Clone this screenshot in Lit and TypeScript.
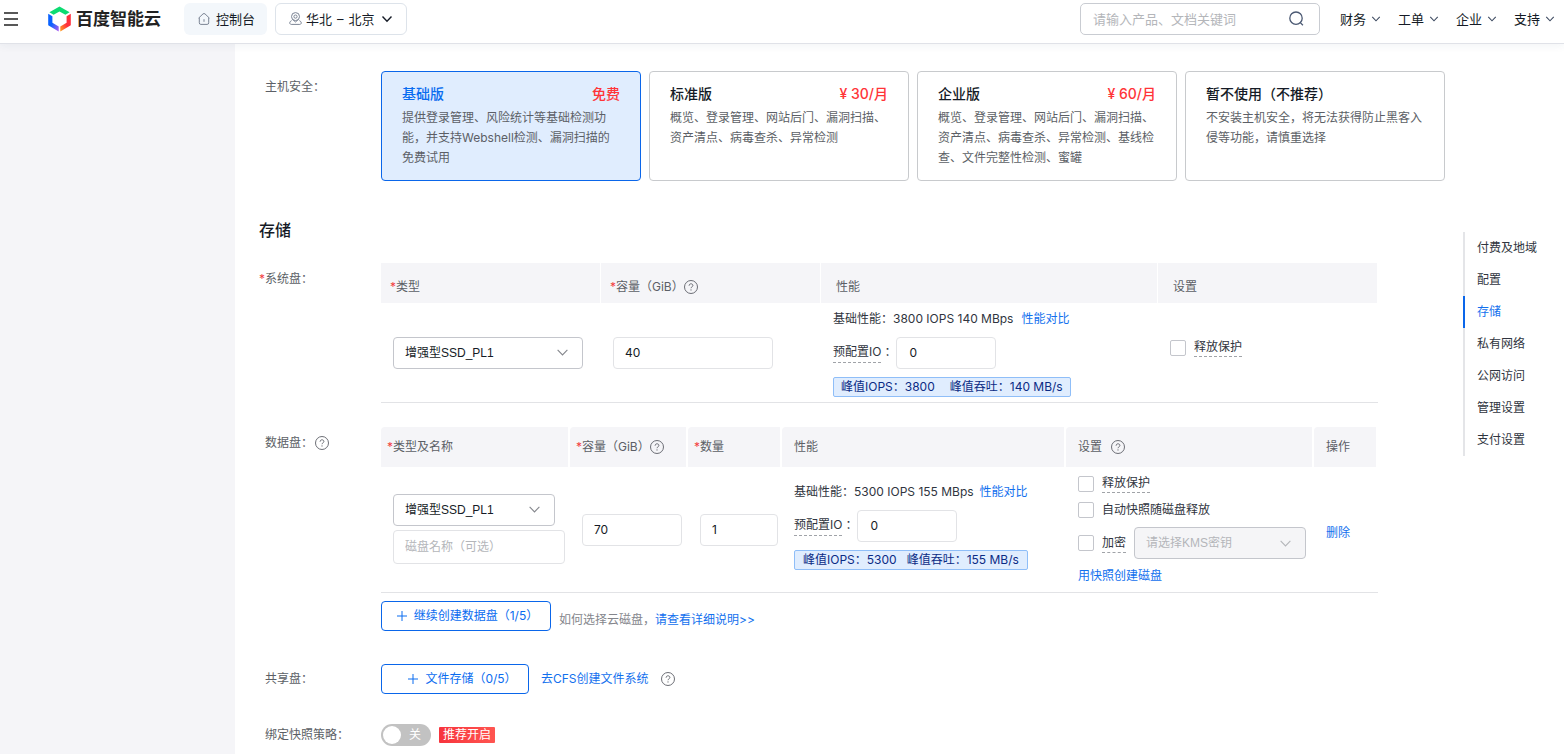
import { LitElement, html, css, nothing } from "lit";
import { customElement, property } from "lit/decorators.js";
import { classMap } from "lit/directives/class-map.js";

const chevron = (size: number, weight = 1) => html`
  <svg class="chevron" width=${size} height=${size} viewBox="0 0 12 12" fill="none" aria-hidden="true">
    <path d="M1.5 3.5 6 8.2l4.5-4.7" stroke="currentColor" stroke-width=${weight} />
  </svg>`;

const plus = html`
  <svg width="12" height="12" viewBox="0 0 12 12" aria-hidden="true">
    <path d="M6 1v10M1 6h10" stroke="currentColor" fill="none" />
  </svg>`;

const controls = css`
  * { box-sizing: border-box; }
  a { color: var(--link); text-decoration: none; }
  button, input, select { font: inherit; color: inherit; margin: 0; }
  button { cursor: pointer; }
  svg { display: block; flex: none; }
  .dashed { border-bottom: 1px dashed #a0a3a8; line-height: 18px; }
`;

/** Circled question mark that sits after a caption. */
@customElement("help-mark")
export class HelpMark extends LitElement {
  static styles = css`
    :host { display: inline-flex; color: #5c5f66; flex: none; }
    svg { display: block; }
  `;
  render() {
    return html`
      <svg width="14" height="14" viewBox="0 0 14 14" fill="none" stroke="currentColor" role="img" aria-label="帮助">
        <circle cx="7" cy="7" r="6.5" stroke-width=".9" />
        <path d="M5.1 5.7c0-1.1.8-1.9 1.9-1.9s1.9.7 1.9 1.7c0 1.3-1.9 1.4-1.9 2.7" stroke-width=".9" />
        <path d="M7 9.4v1.1" stroke-width="1" />
      </svg>`;
  }
}

@customElement("top-bar")
export class TopBar extends LitElement {
  static styles = [controls, css`
    :host { display: block; }
    .bar {
      display: flex; align-items: center; height: 44px; padding: 0 9px 6px 4px;
      border-bottom: 1px solid #e0e2e8; background: #fff; font-size: 13px; color: #151b26;
      box-shadow: 0 2px 8px rgba(40, 60, 110, .06); position: relative;
    }
    .menu { display: flex; padding: 0; border: 0; background: none; }
    .brand { display: flex; align-items: center; gap: 5px; margin-left: 30px; font-size: 17px; font-weight: 700; color: #222; white-space: nowrap; }
    .console, .region {
      display: flex; align-items: center; height: 32px; border-radius: 6px; border: 1px solid transparent;
      white-space: nowrap; padding: 0 12px 0 13px;
    }
    .console { margin-left: 23px; gap: 6px; background: #f3f7fb; color: #151b26; padding: 0 11px 0 13px; }
    .region { margin-left: 8px; gap: 4px; background: #fff; border-color: #dde3ea; padding-right: 13px; }
    .region .chevron { margin-left: 2px; }
    .place { display: flex; gap: 5px; }
    .glyph { color: #7b8494; }
    .search {
      display: flex; align-items: center; width: 240px; height: 32px; margin-left: auto; padding: 0 15px 0 12px;
      border: 1px solid #c9ccd2; border-radius: 5px; color: #4a5872;
    }
    .search input { flex: 1; min-width: 0; border: 0; outline: 0; padding: 0; background: none; }
    .search input::placeholder { color: #b4b6ba; opacity: 1; }
    .search button { display: flex; padding: 0; border: 0; background: none; }
    nav { display: flex; gap: 17px; margin-left: 20px; white-space: nowrap; }
    nav a { display: flex; align-items: center; gap: 5px; color: #151b26; }
    nav .chevron { color: #3d4a60; }
  `];
  render() {
    return html`
      <header class="bar">
        <button class="menu" aria-label="菜单">
          <svg width="14" height="14" viewBox="0 0 14 14"><path d="M0 1h14M0 7h14M0 13h14" stroke="#222" stroke-width="1.6" /></svg>
        </button>
        <a class="brand" href="#">
          <svg width="23" height="26" viewBox="0 0 23 26" aria-hidden="true">
            <defs>
              <linearGradient id="bl" x1="0" y1="0" x2="1" y2="1"><stop offset=".45" stop-color="#0a62ff" /><stop offset="1" stop-color="#b45cf0" /></linearGradient>
              <linearGradient id="rd" x1="1" y1="0" x2="0" y2="1"><stop offset=".5" stop-color="#ff2f3d" /><stop offset="1" stop-color="#ffa21f" /></linearGradient>
            </defs>
            <path d="M1.4 6.3 11.5.4l10.1 5.9-4.2 2.5-5.9-3.4-5.9 3.4z" fill="#0ddb72" />
            <path d="M.2 7.8l4.2 2.4v6.6l6.3 3.6v5L.2 19.2z" fill="url(#bl)" />
            <path d="M22.8 7.8l-4.2 2.4v6.6l-6.3 3.6v5l10.5-6.2z" fill="url(#rd)" />
          </svg>
          <span>百度智能云</span>
        </a>
        <a class="console" href="#">
          <svg class="glyph" width="12" height="12" viewBox="0 0 12 12" fill="none" stroke="currentColor" aria-hidden="true">
            <path d="M.6 5.1 5 .9q1-.8 2 0l4.4 4.2M1.3 4.6v5.2q0 1.6 1.6 1.6h6.2q1.6 0 1.6-1.6V4.6M6 6.2v2.6" />
          </svg>
          <span>控制台</span>
        </a>
        <button class="region">
          <svg class="glyph" width="13" height="13" viewBox="0 0 13 13" fill="none" stroke="currentColor" aria-hidden="true">
            <circle cx="6.5" cy="4.6" r="4" /><circle cx="6.5" cy="4.6" r="1.6" />
            <path d="M3.6 7.4 6.5 10l2.9-2.6M2.6 8.6C.2 9.6.2 12.2 2.2 12.4h8.6c2-.2 2-2.8-.4-3.8" />
          </svg>
          <span class="place"><span>华北</span><span>–</span><span>北京</span></span>
          ${chevron(12, 1.4)}
        </button>
        <form class="search" role="search">
          <input type="text" aria-label="搜索" placeholder="请输入产品、文档关键词" />
          <button type="button" aria-label="搜索">
            <svg width="15" height="15" viewBox="0 0 15 15" fill="none" stroke="currentColor" stroke-width="1.3">
              <circle cx="7" cy="7.2" r="6.2" /><path d="m11.3 11.6 2.6 2.6" />
            </svg>
          </button>
        </form>
        <nav>${["财务", "工单", "企业", "支持"].map((t) => html`<a href="#">${t}${chevron(10, 1.3)}</a>`)}</nav>
      </header>`;
  }
}

interface Plan { name: string; price?: string; text: string; active?: boolean; }

@customElement("plan-card")
export class PlanCard extends LitElement {
  @property({ attribute: false }) plan!: Plan;
  static styles = [controls, css`
    :host { display: grid; }
    .card {
      display: flex; flex-direction: column; gap: 4px; padding: 12px 20px; min-height: 110px;
      border: 1px solid #c8cacd; border-radius: 4px; background: #fff; text-align: left; line-height: 20px; color: #5c5f66;
    }
    .active { border-color: #0a66ea; background: #e0edfe; }
    .head { display: flex; justify-content: space-between; align-self: stretch; font-size: 14px; font-weight: 500; color: #151b26; white-space: nowrap; }
    .active .name { color: #0a6cf0; }
    .price { color: #ff3438; }
  `];
  render() {
    const p = this.plan;
    return html`
      <button class=${classMap({ card: true, active: !!p.active })} aria-pressed=${p.active ? "true" : "false"}>
        <span class="head"><span class="name">${p.name}</span>${p.price ? html`<span class="price">${p.price}</span>` : nothing}</span>
        <span>${p.text}</span>
      </button>`;
  }
}

/** Base performance line, reserved IO box and the peak summary. */
@customElement("disk-performance")
export class DiskPerformance extends LitElement {
  @property() base = "";
  @property() iops = "";
  @property() rate = "";
  @property({ type: Boolean }) wide = false;
  static styles = [controls, css`
    :host { display: flex; flex-direction: column; align-items: flex-start; gap: 8px; white-space: nowrap; line-height: 20px; color: #303540; }
    .line { display: flex; gap: 6px; }
    .line.wide { gap: 8px; }
    .io { display: flex; align-items: center; }
    .io label { display: flex; }
    .colon { font-family: Inter, "Noto Sans CJK TC", sans-serif; margin-right: 3px; }
    .io input { width: 100px; height: 32px; padding: 0 12px; border: 1px solid #e2e3e6; border-radius: 4px; color: #151b26; background: #fff; }
    .peak { display: flex; gap: 10px; height: 20px; line-height: 18px; padding: 0 8px; border: 1px solid #8fbef8; border-radius: 2px; background: #e0edfe; color: #0b2b85; }
    .peak.wide { gap: 15px; padding: 0 7px; }
  `];
  render() {
    const wide = this.wide;
    return html`
      <div class=${classMap({ line: true, wide })}><span>基础性能：${this.base}</span><a href="#">性能对比</a></div>
      <div class="io">
        <label for="io"><span class="dashed">预配置IO</span><span class="colon">：</span></label>
        <input id="io" type="text" value="0" />
      </div>
      <div class=${classMap({ peak: true, wide })}><span>峰值IOPS：${this.iops}</span><span>峰值吞吐：${this.rate}</span></div>`;
  }
}

@customElement("storage-form")
export class StorageForm extends LitElement {
  static styles = [controls, css`
    :host { display: block; }
    .row { display: grid; grid-template-columns: 122px minmax(0, 1fr); margin-bottom: 24px; }
    .row.more { margin-bottom: 32px; }
    .caption { display: flex; align-items: center; gap: 2px; height: 32px; padding-left: 6px; color: #5c5f66; white-space: nowrap; }
    .req::before { content: "*"; display: inline-block; width: 6px; margin-left: -6px; color: #f33e3e; }
    h2 { margin: 36px 0 20px; font-size: 16px; line-height: 26px; font-weight: 500; color: #151b26; }
    .plans { display: grid; grid-template-columns: repeat(4, minmax(0, 1fr)); gap: 8px; }
    table { width: 100%; max-width: 997px; table-layout: fixed; border-collapse: separate; border-spacing: 0; }
    th { height: 40px; padding: 0 0 0 12px; border-right: 2px solid #fff; background: #f5f5f8; background-clip: padding-box; border-top-left-radius: 4px; text-align: left; font-weight: 400; color: #5c5f66; white-space: nowrap; }
    .system th { padding: 7px 0 0 15px; border-right-width: 1px; border-radius: 0; }
    .title { display: flex; align-items: center; }
    .title.spaced help-mark { margin-left: 9px; }
    td { height: 126px; padding: 0 0 0 12px; border-bottom: 1px solid #e2e3e6; white-space: nowrap; color: #303540; }
    .system td { height: 100px; }
    .stack { display: flex; flex-direction: column; align-items: flex-start; gap: 4px; padding-bottom: 2px; }
    .pick { display: inline-flex; align-items: center; position: relative; color: #151b26; }
    .pick select { appearance: none; width: 162px; height: 32px; padding: 0 32px 0 11px; border: 1px solid #c4c6cc; border-radius: 4px; background: #fff; font-family: "Liberation Sans", "Noto Sans CJK SC", sans-serif; }
    .system .pick select { width: 190px; }
    .pick .chevron { position: absolute; right: 14px; color: #84868c; pointer-events: none; }
    .pick.key select { width: 172px; background: #f5f5f7; color: #b4b6ba; opacity: 1; }
    .pick.key .chevron { color: #b4b6ba; }
    .box { height: 32px; width: 160px; padding: 0 11px; border: 1px solid #e2e3e6; border-radius: 4px; color: #151b26; background: #fff; display: block; }
    .size { width: 100px; }
    .count { width: 78px; }
    .diskname { width: 172px; height: 34px; font-family: Inter, "Noto Sans CJK TC", sans-serif; }
    .diskname::placeholder { color: #b4b6ba; opacity: 1; }
    .check { display: flex; align-items: center; gap: 8px; }
    .check input { appearance: none; width: 16px; height: 16px; border: 1px solid #c4c6cc; border-radius: 2px; background: #fff; flex: none; }
    .settings { display: flex; flex-direction: column; align-items: flex-start; gap: 8px; line-height: 18px; }
    .encrypt { display: flex; align-items: center; gap: 8px; }
    .lift { padding-bottom: 10px; }
    .low { padding-top: 6px; }
    .raise { padding-bottom: 8px; }
    .under { display: flex; align-items: flex-end; gap: 8px; margin-top: 8px; line-height: 22px; color: #84868c; }
    .inline { display: flex; align-items: center; gap: 12px; height: 32px; }
    .inline.tight { gap: 8px; }
    .add { display: flex; align-items: center; justify-content: center; gap: 6px; width: 170px; height: 30px; padding: 0 0 0 2px; border: 1px solid #0a66ea; border-radius: 4px; background: #fff; color: #0a6cf0; white-space: nowrap; }
    .file { width: 148px; padding: 0 0 0 14px; }
    .switch { display: flex; align-items: center; gap: 8px; width: 50px; height: 22px; padding: 0 2px; border: 0; border-radius: 11px; background: #c2c2c2; color: #fff; }
    .knob { width: 18px; height: 18px; border-radius: 50%; background: #fff; }
    .badge { height: 16px; line-height: 16px; padding: 0 4px; border-radius: 1px; background: linear-gradient(90deg, #f7343d, #ff5550); color: #fff; }
    .w220 { width: 220px; } .w337 { width: 337px; } .w189 { width: 189px; } .w118 { width: 118px; }
    .w94 { width: 94px; } .w284 { width: 284px; } .w248 { width: 248px; } .w64 { width: 64px; }
  `];

  plans: Plan[] = [
    { name: "基础版", price: "免费", text: "提供登录管理、风险统计等基础检测功能，并支持Webshell检测、漏洞扫描的免费试用", active: true },
    { name: "标准版", price: "¥ 30/月", text: "概览、登录管理、网站后门、漏洞扫描、资产清点、病毒查杀、异常检测" },
    { name: "企业版", price: "¥ 60/月", text: "概览、登录管理、网站后门、漏洞扫描、资产清点、病毒查杀、异常检测、基线检查、文件完整性检测、蜜罐" },
    { name: "暂不使用（不推荐）", text: "不安装主机安全，将无法获得防止黑客入侵等功能，请慎重选择" },
  ];

  head(text: string, width: string, opts: { req?: boolean; help?: boolean; spaced?: boolean } = {}) {
    return html`<th class=${width} scope="col"><div class=${classMap({ title: true, spaced: !!opts.spaced })}>
      <span class=${opts.req ? "req" : ""}>${text}</span>${opts.help ? html`<help-mark></help-mark>` : nothing}</div></th>`;
  }

  type() {
    return html`<span class="pick"><select aria-label="类型"><option>增强型SSD_PL1</option></select>${chevron(13)}</span>`;
  }

  render() {
    return html`
      <div class="row">
        <div class="caption">主机安全：</div>
        <div class="plans">${this.plans.map((p) => html`<plan-card .plan=${p}></plan-card>`)}</div>
      </div>
      <h2>存储</h2>
      <div class="row">
        <div class="caption"><span class="req">系统盘：</span></div>
        <table class="system">
          <thead><tr>
            ${this.head("类型", "w220", { req: true })}
            ${this.head("容量（GiB）", "w220", { req: true, help: true })}
            ${this.head("性能", "w337")}
            ${this.head("设置", "w220")}
          </tr></thead>
          <tbody><tr>
            <td>${this.type()}</td>
            <td><input class="box" type="text" aria-label="容量" value="40" /></td>
            <td><disk-performance wide base="3800 IOPS 140 MBps" iops="3800" rate="140 MB/s"></disk-performance></td>
            <td><div class="lift"><label class="check"><input type="checkbox" /><span class="dashed">释放保护</span></label></div></td>
          </tr></tbody>
        </table>
      </div>
      <div class="row more">
        <div class="caption">数据盘：<help-mark></help-mark></div>
        <div>
          <table>
            <thead><tr>
              ${this.head("类型及名称", "w189", { req: true })}
              ${this.head("容量（GiB）", "w118", { req: true, help: true })}
              ${this.head("数量", "w94", { req: true })}
              ${this.head("性能", "w284")}
              ${this.head("设置", "w248", { help: true, spaced: true })}
              ${this.head("操作", "w64")}
            </tr></thead>
            <tbody><tr>
              <td><div class="stack">${this.type()}<input class="box diskname" type="text" aria-label="磁盘名称" placeholder="磁盘名称（可选）" /></div></td>
              <td><input class="box size" type="text" aria-label="容量" value="70" /></td>
              <td><input class="box count" type="text" aria-label="数量" value="1" /></td>
              <td><div class="raise"><disk-performance base="5300 IOPS 155 MBps" iops="5300" rate="155 MB/s"></disk-performance></div></td>
              <td><div class="settings">
                <label class="check"><input type="checkbox" /><span class="dashed">释放保护</span></label>
                <label class="check"><input type="checkbox" /><span>自动快照随磁盘释放</span></label>
                <div class="encrypt">
                  <label class="check"><input type="checkbox" /><span class="dashed">加密</span></label>
                  <span class="pick key"><select disabled aria-label="KMS密钥"><option>请选择KMS密钥</option></select>${chevron(13)}</span>
                </div>
                <a href="#">用快照创建磁盘</a>
              </div></td>
              <td><div class="low"><a href="#">删除</a></div></td>
            </tr></tbody>
          </table>
          <div class="under">
            <button class="add">${plus}继续创建数据盘（1/5）</button>
            <span>如何选择云磁盘，<a href="#">请查看详细说明&gt;&gt;</a></span>
          </div>
        </div>
      </div>
      <div class="row">
        <div class="caption">共享盘：</div>
        <div class="inline">
          <button class="add file">${plus}文件存储（0/5）</button>
          <a href="#">去CFS创建文件系统</a><help-mark></help-mark>
        </div>
      </div>
      <div class="row">
        <div class="caption">绑定快照策略：</div>
        <div class="inline tight">
          <button class="switch" role="switch" aria-checked="false" aria-label="绑定快照策略"><span class="knob"></span>关</button>
          <span class="badge">推荐开启</span>
        </div>
      </div>`;
  }
}

@customElement("app-root")
export class AppRoot extends LitElement {
  static styles = [controls, css`
    :host {
      --link: #1270ee;
      display: flex; flex-direction: column; height: 100vh; overflow: hidden; background: #fff;
      font: 12px/20px Inter, "Noto Sans CJK SC", sans-serif; color: #151b26;
    }
    top-bar { flex: none; z-index: 1; }
    .body { display: flex; flex: 1; min-height: 0; }
    .side { flex: none; width: 235px; background: #f5f5f8; }
    main { flex: 1; min-width: 0; padding: 27px 18px 0 24px; overflow: hidden; }
    .anchors { flex: none; width: 101px; margin-top: 188px; }
    .anchors a { display: block; line-height: 32px; padding-left: 12px; border-left: 2px solid #e4e5e8; color: #303540; white-space: nowrap; }
    .anchors a.on { border-color: #0a66ea; color: #1270ee; }
  `];
  render() {
    return html`
      <top-bar></top-bar>
      <div class="body">
        <aside class="side"></aside>
        <main><storage-form></storage-form></main>
        <nav class="anchors">
          ${["付费及地域", "配置", "存储", "私有网络", "公网访问", "管理设置", "支付设置"].map(
            (t) => html`<a href="#" class=${t === "存储" ? "on" : ""}>${t}</a>`)}
        </nav>
      </div>`;
  }
}
